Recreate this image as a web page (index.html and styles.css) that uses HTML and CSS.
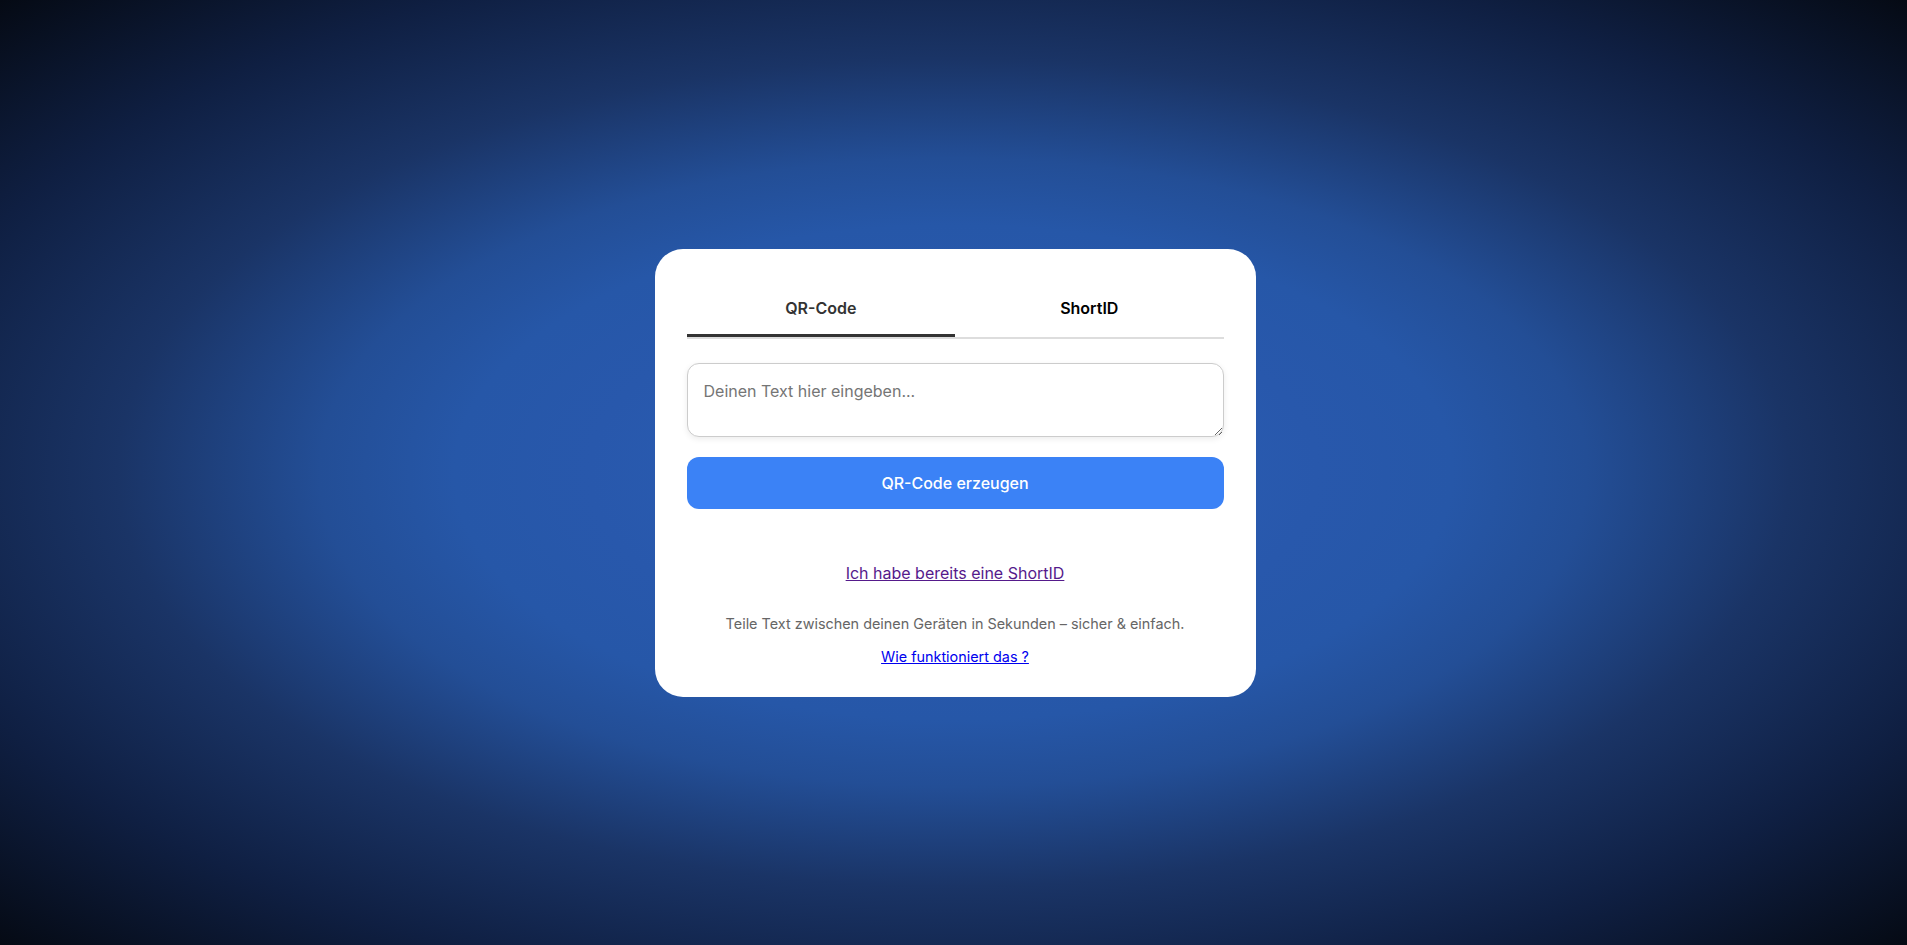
FILE: index.html
```html
<!DOCTYPE html>
<html lang="de">
<head>
<meta charset="utf-8">
<title>Text teilen</title>
<link rel="stylesheet" href="styles.css">
</head>
<body>
<main class="page">
  <section class="card">
    <div class="tabs">
      <button class="tab tab-active">QR-Code</button>
      <button class="tab">ShortID</button>
    </div>
    <textarea class="input" placeholder="Deinen Text hier eingeben..."></textarea>
    <button class="primary">QR-Code erzeugen</button>
    <div class="alt"><a class="alt-link" href="#">Ich habe bereits eine ShortID</a></div>
    <div class="footer">
      <p class="footer-text">Teile Text zwischen deinen Geräten in Sekunden – sicher &amp; einfach.</p>
      <a class="footer-link" href="#">Wie funktioniert das ?</a>
    </div>
  </section>
</main>
</body>
</html>
```
FILE: styles.css
```css
html, body {
  margin: 0;
  height: 100%;
}
body {
  font-family: Inter, "Noto Sans", sans-serif;
  background: radial-gradient(ellipse at center, #2c60b8 0%, #2858ac 27%, #2657a8 37%, #234e96 47%, #1a3466 62%, #0f1f42 80%, #050a14 100%);
}
.page {
  height: 100%;
  display: flex;
  align-items: center;
  justify-content: center;
}
.card {
  width: 601px;
  box-sizing: border-box;
  padding: 33px 32px 31px;
  margin-left: 3px;
  background: #fff;
  border-radius: 28px;
  display: flex;
  flex-direction: column;
}
.tabs {
  display: flex;
  border-bottom: 2px solid #ddd;
}
.tab {
  flex: 1;
  background: none;
  border: none;
  border-bottom: 3px solid transparent;
  padding: 16px 0;
  font-family: Inter, sans-serif;
  font-size: 16px;
  line-height: 20px;
  font-weight: 600;
  color: #000;
  cursor: pointer;
}
.tab-active {
  border-bottom-color: #333;
  color: #333;
}
.input {
  margin-top: 24px;
  height: 74px;
  box-sizing: border-box;
  width: 100%;
  padding: 16px;
  border: 1px solid #ccc;
  border-radius: 12px;
  font-family: Inter, sans-serif;
  font-size: 16px;
  line-height: 22px;
  box-shadow: 0 2px 6px rgba(0, 0, 0, 0.08);
  outline: none;
}
.input::placeholder {
  color: #757575;
}
.primary {
  margin-top: 20px;
  padding: 16px;
  border: none;
  border-radius: 12px;
  background: #3b82f6;
  color: #fff;
  font-family: Inter, sans-serif;
  font-size: 16px;
  line-height: 20px;
  font-weight: 500;
  cursor: pointer;
}
.alt {
  margin-top: 54px;
  text-align: center;
  font-size: 16px;
  line-height: 20px;
}
.alt-link {
  color: #551a8b;
}
.footer {
  margin-top: 32px;
  display: flex;
  flex-direction: column;
  align-items: center;
  gap: 16px;
  font-size: 14.4px;
  line-height: 17.5px;
}
.footer-text {
  margin: 0;
  color: #666;
}
.footer-link {
  color: #0000ee;
}
```
